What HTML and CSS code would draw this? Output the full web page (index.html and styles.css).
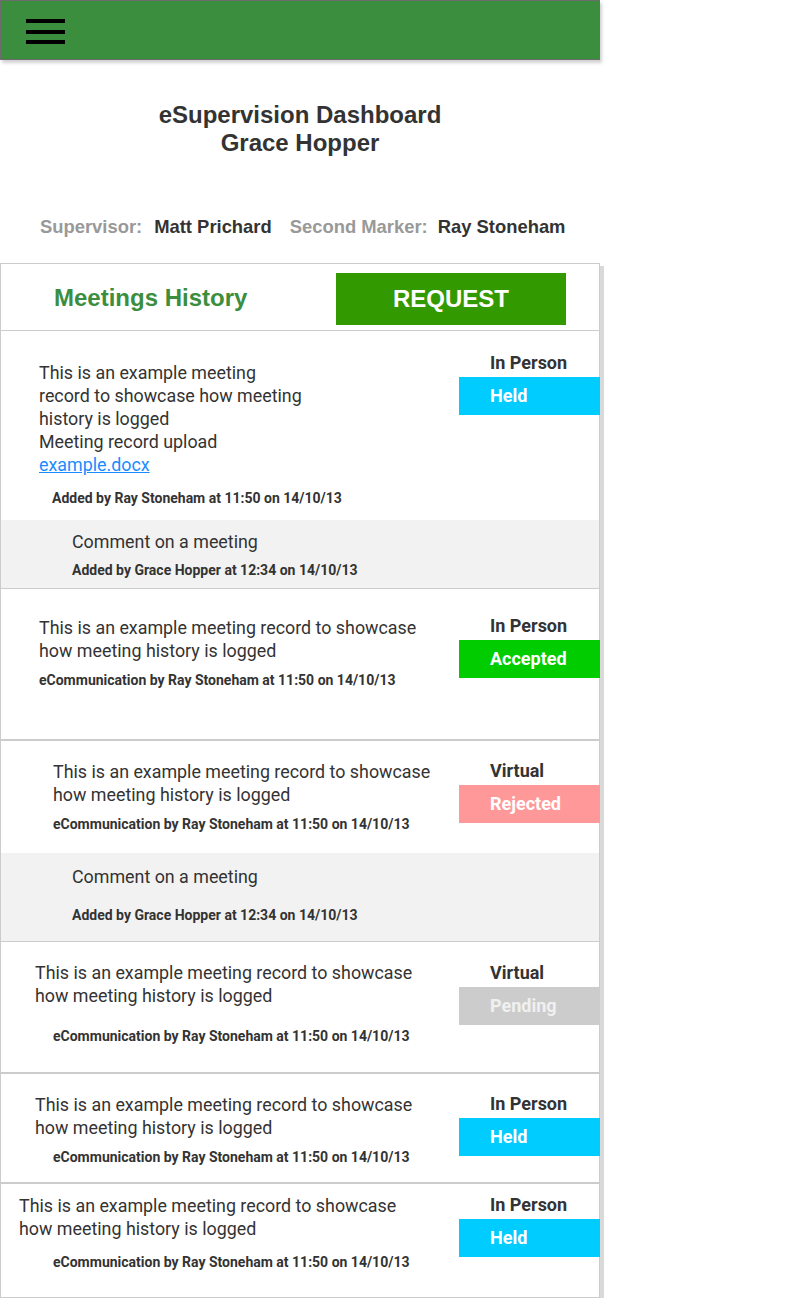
FILE: index.html
```html
<!DOCTYPE html>
<html lang="en">
<head>
<meta charset="utf-8">
<title>eSupervision Dashboard</title>
<link rel="stylesheet" href="styles.css">
</head>
<body>
<div class="page">
  <header class="topbar">
    <div class="menu" aria-label="Menu">
      <span class="bar"></span>
      <span class="bar"></span>
      <span class="bar"></span>
    </div>
  </header>

  <h1 class="title">eSupervision Dashboard<br>Grace Hopper</h1>

  <div class="people">
    <span class="role">Supervisor:</span><span class="name">Matt Prichard</span>
    <span class="role second">Second Marker:</span><span class="name second-name">Ray Stoneham</span>
  </div>

  <section class="card">
    <div class="card-head">
      <h2 class="card-title">Meetings History</h2>
      <div class="btn">REQUEST</div>
    </div>

    <div class="meeting m1">
      <div class="meeting-body">
        <p class="desc narrow">This is an example meeting record to showcase how meeting history is logged</p>
        <p class="desc">Meeting record upload<br><a class="file" href="#">example.docx</a></p>
        <p class="caption">Added by Ray Stoneham at 11:50 on 14/10/13</p>
      </div>
      <div class="meeting-meta">
        <div class="meta-label">In Person</div>
        <div class="badge held">Held</div>
      </div>
    </div>
    <div class="comment c1">
      <p class="desc">Comment on a meeting</p>
      <p class="caption">Added by Grace Hopper at 12:34 on 14/10/13</p>
    </div>

    <div class="meeting m2">
      <div class="meeting-body">
        <p class="desc wide">This is an example meeting record to showcase how meeting history is logged</p>
        <p class="caption">eCommunication by Ray Stoneham at 11:50 on 14/10/13</p>
      </div>
      <div class="meeting-meta">
        <div class="meta-label">In Person</div>
        <div class="badge accepted">Accepted</div>
      </div>
    </div>

    <div class="meeting m3">
      <div class="meeting-body">
        <p class="desc wide">This is an example meeting record to showcase how meeting history is logged</p>
        <p class="caption">eCommunication by Ray Stoneham at 11:50 on 14/10/13</p>
      </div>
      <div class="meeting-meta">
        <div class="meta-label">Virtual</div>
        <div class="badge rejected">Rejected</div>
      </div>
    </div>
    <div class="comment c2">
      <p class="desc">Comment on a meeting</p>
      <p class="caption">Added by Grace Hopper at 12:34 on 14/10/13</p>
    </div>

    <div class="meeting m4">
      <div class="meeting-body">
        <p class="desc wide">This is an example meeting record to showcase how meeting history is logged</p>
        <p class="caption">eCommunication by Ray Stoneham at 11:50 on 14/10/13</p>
      </div>
      <div class="meeting-meta">
        <div class="meta-label">Virtual</div>
        <div class="badge pending">Pending</div>
      </div>
    </div>

    <div class="meeting m5">
      <div class="meeting-body">
        <p class="desc wide">This is an example meeting record to showcase how meeting history is logged</p>
        <p class="caption">eCommunication by Ray Stoneham at 11:50 on 14/10/13</p>
      </div>
      <div class="meeting-meta">
        <div class="meta-label">In Person</div>
        <div class="badge held">Held</div>
      </div>
    </div>

    <div class="meeting m6">
      <div class="meeting-body">
        <p class="desc wide">This is an example meeting record to showcase how meeting history is logged</p>
        <p class="caption">eCommunication by Ray Stoneham at 11:50 on 14/10/13</p>
      </div>
      <div class="meeting-meta">
        <div class="meta-label">In Person</div>
        <div class="badge held">Held</div>
      </div>
    </div>
  </section>
</div>
</body>
</html>
```

FILE: styles.css
```css
* { box-sizing: border-box; }

body {
  margin: 0;
  background: #ffffff;
  color: #333333;
  font-family: Roboto, "Liberation Sans", Arial, sans-serif;
}

.page {
  width: 600px;
}

/* Top bar */
.topbar {
  height: 60px;
  background: #3a8e3e;
  border: 1px solid #6b6b6b;
  box-shadow: 2px 3px 3px rgba(0, 0, 0, 0.18);
  padding: 18px 0 0 25px;
}

.menu {
  width: 39px;
  height: 25px;
  display: flex;
  flex-direction: column;
  justify-content: space-between;
}

.bar {
  display: block;
  height: 4px;
  background: #000000;
}

/* Title */
.title {
  margin: 41px 0 0;
  font-family: "Liberation Sans", Arial, sans-serif;
  font-weight: bold;
  font-size: 24px;
  line-height: 28px;
  text-align: center;
  color: #333333;
}

.people {
  margin-top: 60px;
  padding-left: 40px;
  display: flex;
  font-family: "Liberation Sans", Arial, sans-serif;
  font-weight: bold;
  font-size: 18.4px;
  line-height: 20px;
}

.role { color: #999999; }
.role.second { margin-left: 18px; }
.name { color: #333333; margin-left: 12px; }
.name.second-name { margin-left: 10px; }

/* Card */
.card {
  margin-top: 26px;
  border: 1px solid #cccccc;
  box-shadow: 4px 3px 0 #d9d9d9;
  background: #ffffff;
}

.card-head {
  height: 67px;
  display: flex;
  align-items: center;
  justify-content: space-between;
  padding: 0 33px 0 53px;
  border-bottom: 1px solid #cccccc;
}

.card-title {
  margin: 2px 0 0;
  font-family: "Liberation Sans", Arial, sans-serif;
  font-weight: bold;
  font-size: 24px;
  color: #3a8e3e;
}

.btn {
  width: 230px;
  height: 52px;
  margin-top: 3px;
  background: #339900;
  color: #ffffff;
  display: flex;
  align-items: center;
  justify-content: center;
  font-family: "Liberation Sans", Arial, sans-serif;
  font-weight: bold;
  font-size: 24px;
}

/* Meetings */
.meeting {
  display: flex;
}

.meeting-body {
  flex: 1;
}

.meeting-meta {
  width: 141px;
  margin-right: -1px;
}

.desc {
  margin: 0;
  font-size: 17.85px;
  line-height: 23px;
  color: #333333;
}

.desc.narrow { width: 272px; }
.desc.wide { width: 400px; }

.file {
  color: #1a8cff;
  text-decoration: underline;
}

.caption {
  margin: 0;
  font-size: 14px;
  line-height: 16px;
  font-weight: bold;
  color: #333333;
}

.meta-label {
  padding-left: 31px;
  font-size: 18px;
  line-height: 22px;
  font-weight: bold;
  color: #333333;
}

.badge {
  height: 38px;
  margin-top: 3px;
  padding-left: 31px;
  font-size: 18px;
  line-height: 38px;
  font-weight: bold;
  color: #ffffff;
}

.badge.held { background: #00ccff; }
.badge.accepted { background: #00cc00; }
.badge.rejected { background: #ff9999; }
.badge.pending { background: #cccccc; color: #f0f0f0; }

.comment {
  background: #f2f2f2;
  padding-left: 71px;
}

/* Per-row spacing */
.m1 .meeting-body { padding: 30px 0 14px 38px; }
.m1 .caption { margin: 14px 0 0 13px; }
.m1 .meeting-meta { padding-top: 21px; }

.c1 { padding-top: 10px; padding-bottom: 10px; }
.c1 .caption { margin-top: 9px; }

.m2 { border-top: 1px solid #cccccc; }
.m2 .meeting-body { padding: 27px 0 51px 38px; }
.m2 .caption { margin-top: 10px; }
.m2 .meeting-meta { padding-top: 26px; }

.m3 { border-top: 2px solid #cccccc; }
.m3 .meeting-body { padding: 19px 0 21px 52px; }
.m3 .caption { margin-top: 10px; }
.m3 .meeting-meta { padding-top: 19px; }

.c2 { padding-top: 12px; padding-bottom: 18px; }
.c2 .caption { margin-top: 19px; }

.m4 { border-top: 1px solid #cccccc; }
.m4 .meeting-body { padding: 19px 0 28px 34px; }
.m4 .caption { margin: 21px 0 0 18px; }
.m4 .meeting-meta { padding-top: 20px; }

.m5 { border-top: 2px solid #cccccc; }
.m5 .meeting-body { padding: 19px 0 17px 34px; }
.m5 .caption { margin: 10px 0 0 18px; }
.m5 .meeting-meta { padding-top: 19px; }

.m6 { border-top: 2px solid #cccccc; }
.m6 .meeting-body { padding: 10px 0 27px 18px; }
.m6 .caption { margin: 14px 0 0 34px; }
.m6 .meeting-meta { padding-top: 10px; }
```
